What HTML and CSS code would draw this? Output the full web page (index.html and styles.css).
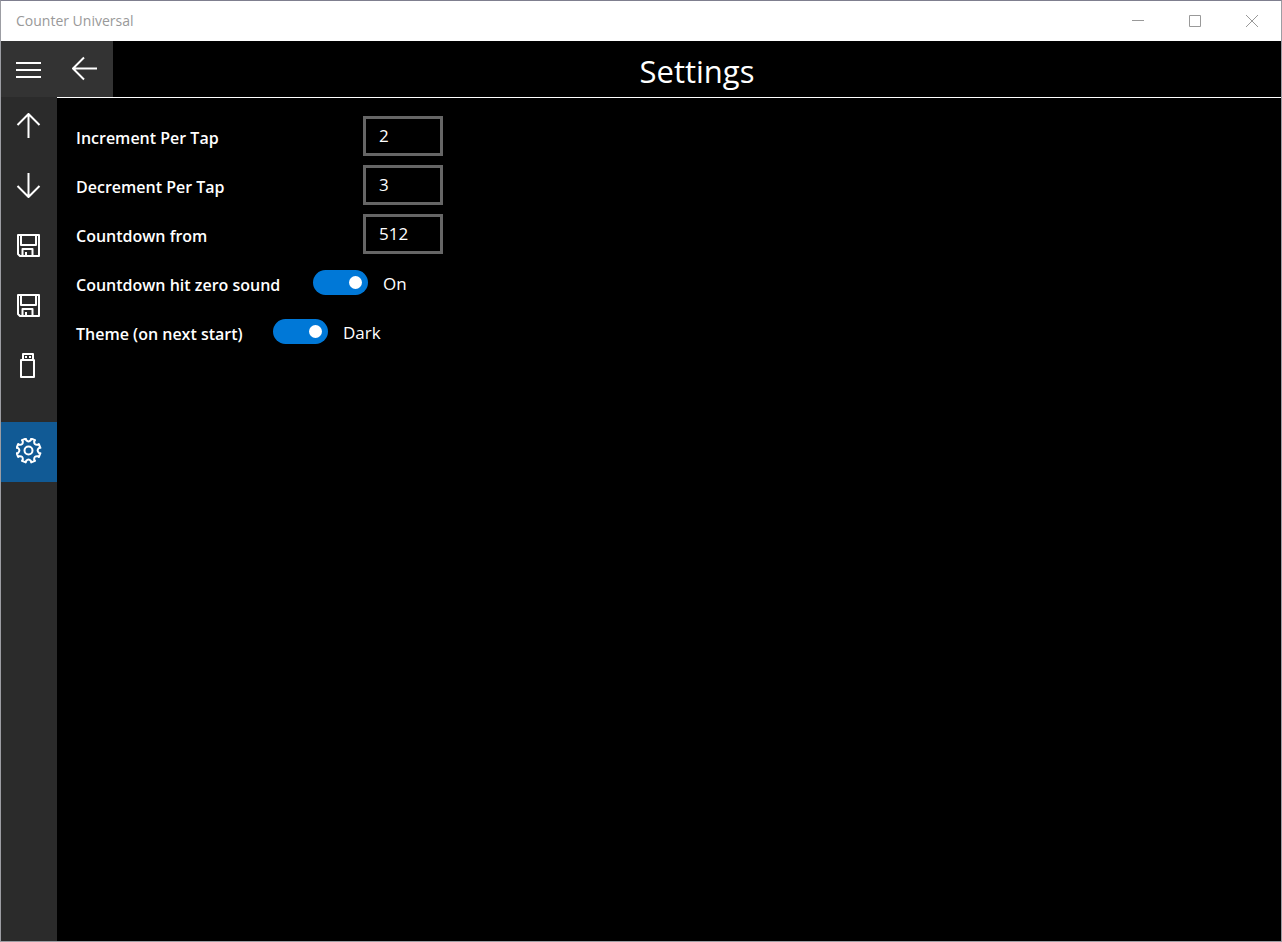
FILE: index.html
```html
<!DOCTYPE html>
<html lang="en">
<head>
    <meta charset="utf-8">
    <title>Counter Universal</title>
    <link rel="stylesheet" href="styles.css">
</head>
<body>
    <div class="window">
        <div class="title-bar">
            <span class="app-name">Counter Universal</span>
            <div class="window-buttons">
                <button type="button" aria-label="Minimize">
                    <svg width="12" height="12" viewBox="0 0 12 12"><path d="M0 5.5h12"/></svg>
                </button>
                <button type="button" aria-label="Maximize">
                    <svg width="12" height="12" viewBox="0 0 12 12"><path d="M.5.5h11v11H.5z"/></svg>
                </button>
                <button type="button" aria-label="Close">
                    <svg width="12" height="12" viewBox="0 0 12 12"><path d="M0 0l12 12M12 0L0 12"/></svg>
                </button>
            </div>
        </div>

        <div class="app">
            <nav class="sidebar">
                <button type="button" class="menu-button" aria-label="Menu">
                    <svg width="26" height="26" viewBox="0 0 26 26"><path d="M0 5h25M0 12h25M0 19h25"/></svg>
                </button>
                <button type="button" class="nav-item" aria-label="Increment">
                    <svg width="26" height="26" viewBox="0 0 26 26"><path d="M12.500 25V1M1.500 12l11-11 11 11"/></svg>
                </button>
                <button type="button" class="nav-item" aria-label="Decrement">
                    <svg width="26" height="26" viewBox="0 0 26 26"><path d="M12.500 0v24M1.500 13l11 11 11-11"/></svg>
                </button>
                <button type="button" class="nav-item" aria-label="Save">
                    <svg width="26" height="26" viewBox="0 0 26 26"><path d="M2 2h21v21H4L2 21zM5 2v10h15V2M6.500 23v-7h10v7M10 23v-4"/></svg>
                </button>
                <button type="button" class="nav-item" aria-label="Save as">
                    <svg width="26" height="26" viewBox="0 0 26 26"><path d="M2 2h21v21H4L2 21zM5 2v10h15V2M6.500 23v-7h10v7M10 23v-4"/></svg>
                </button>
                <button type="button" class="nav-item" aria-label="Load">
                    <svg width="26" height="26" viewBox="0 0 26 26"><path d="M5 7h13v17H5zM7 7V1h10v6M9 4h2M13 4h2"/></svg>
                </button>
                <button type="button" class="nav-item selected" aria-label="Settings">
                    <svg width="26" height="26" viewBox=".5 .5 26 26"><circle cx="13" cy="13" r="4"/><path d="M10.300 1.100L10.600 2.500Q13 5.300 15.400 2.500L15.700 1.100L19.500 2.700L18.700 3.900Q18.400 7.600 22.100 7.300L23.300 6.500L24.900 10.300L23.500 10.600Q20.700 13 23.500 15.400L24.900 15.700L23.300 19.500L22.100 18.700Q18.400 18.400 18.700 22.100L19.500 23.300L15.700 24.900L15.400 23.500Q13 20.700 10.600 23.500L10.300 24.900L6.500 23.300L7.300 22.100Q7.600 18.400 3.900 18.700L2.700 19.500L1.100 15.700L2.500 15.400Q5.300 13 2.500 10.600L1.100 10.300L2.700 6.500L3.900 7.300Q7.600 7.600 7.300 3.900L6.500 2.700z"/></svg>
                </button>
            </nav>

            <main>
                <header>
                    <button type="button" class="back-button" aria-label="Back">
                        <svg width="26" height="26" viewBox="0 0 26 26"><path d="M25 12.500H1M12 1.500l-11 11 11 11"/></svg>
                    </button>
                    <h1>Settings</h1>
                </header>
                <form class="settings">
                    <div class="row">
                        <label for="increment">Increment Per Tap</label>
                        <input type="text" id="increment" value="2">
                    </div>
                    <div class="row">
                        <label for="decrement">Decrement Per Tap</label>
                        <input type="text" id="decrement" value="3">
                    </div>
                    <div class="row">
                        <label for="countdown">Countdown from</label>
                        <input type="text" id="countdown" value="512">
                    </div>
                    <div class="row sound">
                        <label for="sound">Countdown hit zero sound</label>
                        <input type="checkbox" id="sound" checked>
                        <span>On</span>
                    </div>
                    <div class="row theme">
                        <label for="theme">Theme (on next start)</label>
                        <input type="checkbox" id="theme" checked>
                        <span>Dark</span>
                    </div>
                </form>
            </main>
        </div>
    </div>
</body>
</html>
```
FILE: styles.css
```css
* {
    box-sizing: border-box;
}

body {
    margin: 0;
    background-color: #000;
    color: #fff;
    font-family: "Open Sans", "Noto Sans", sans-serif;
}

button {
    display: flex;
    align-items: center;
    justify-content: center;
    padding: 0;
    border: none;
    background: none;
    color: inherit;
}

svg {
    display: block;
    fill: none;
    stroke: currentColor;
    stroke-width: 2;
    stroke-linejoin: round;
}

.window {
    display: flex;
    flex-direction: column;
    min-height: 100vh;
    border: 1px solid #9c9da3;
    border-top-color: #7f7f8f;
}

.title-bar {
    display: flex;
    justify-content: space-between;
    height: 40px;
    padding: 0 1px 0 15px;
    background-color: #fff;
    color: #999;
}

.app-name {
    font-size: 14px;
    line-height: 40px;
}

.window-buttons {
    display: flex;
}

.window-buttons button {
    width: 57px;
}

.window-buttons svg {
    stroke-width: 1;
    stroke-linejoin: miter;
}

.app {
    display: flex;
    flex: 1;
}

.sidebar {
    width: 56px;
    background-color: #2b2b2b;
}

.menu-button,
.back-button {
    width: 56px;
    height: 56px;
    background-color: #333;
}

.menu-button {
    padding-top: 4px;
}

.nav-item {
    width: 56px;
    height: 60px;
    padding-bottom: 2px;
}

.nav-item.selected {
    margin-top: 25px;
    background-color: #115a95;
}

main {
    flex: 1;
}

header {
    display: flex;
    height: 57px;
    border-bottom: 1px solid #fff;
}

h1 {
    flex: 1;
    margin: 0;
    font-size: 31px;
    font-weight: normal;
    line-height: 60px;
    text-align: center;
}

.settings {
    display: flex;
    flex-direction: column;
    gap: 9px;
    padding: 18px 19px;
}

.row {
    display: flex;
    align-items: center;
    height: 40px;
    font-size: 17px;
}

label {
    width: 287px;
    padding-top: 4px;
    font-size: 16px;
    font-weight: 600;
    white-space: nowrap;
}

.sound label {
    width: 237px;
}

.theme label {
    width: 197px;
}

input[type="text"] {
    width: 80px;
    height: 40px;
    padding: 0 13px 2px;
    border: 3px solid #666;
    border-radius: 0;
    background-color: #000;
    color: #fff;
    font-family: inherit;
    font-size: 17px;
}

input[type="checkbox"] {
    appearance: none;
    display: flex;
    align-items: center;
    justify-content: flex-end;
    width: 55px;
    height: 25px;
    margin: 0 15px 2px 0;
    padding: 0 6px;
    border-radius: 13px;
    background-color: #0078d7;
}

input[type="checkbox"]::before {
    content: "";
    width: 13px;
    height: 13px;
    border-radius: 50%;
    background-color: #fff;
}

input[type="checkbox"]:not(:checked) {
    justify-content: flex-start;
    background-color: #666;
}
```
